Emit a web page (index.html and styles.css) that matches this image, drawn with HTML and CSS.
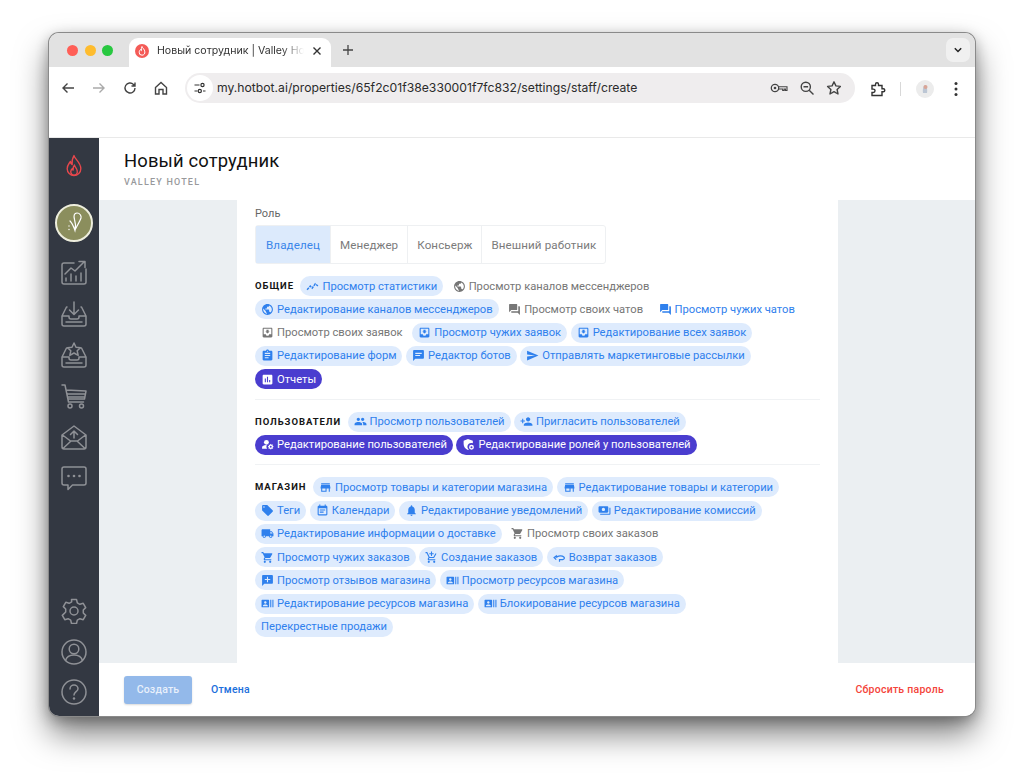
FILE: index.html
```html
<!DOCTYPE html>
<html lang="ru">
<head>
<meta charset="utf-8">
<title>Новый сотрудник | Valley Hotel</title>
<link rel="stylesheet" href="styles.css">
</head>
<body>
<svg class="defs" width="0" height="0" aria-hidden="true">
  <symbol id="i-stat" viewBox="0 0 24 24"><path d="M2 18l6-7 3.5 4L17 7l5 4" fill="none" stroke="currentColor" stroke-width="2.6" stroke-dasharray="5 1.6"/></symbol>
  <symbol id="i-public" viewBox="0 0 24 24"><path d="M12 2C6.48 2 2 6.48 2 12s4.48 10 10 10 10-4.48 10-10S17.52 2 12 2zm-1 17.93c-3.95-.49-7-3.85-7-7.93 0-.62.08-1.21.21-1.79L9 15v1c0 1.1.9 2 2 2v1.93zm6.9-2.54c-.26-.81-1-1.39-1.9-1.39h-1v-3c0-.55-.45-1-1-1H8v-2h2c.55 0 1-.45 1-1V7h2c1.1 0 2-.9 2-2v-.41c2.93 1.19 5 4.06 5 7.41 0 2.08-.8 3.97-2.1 5.39z"/></symbol>
  <symbol id="i-forum" viewBox="0 0 24 24"><path d="M21 6h-2v9H6v2c0 .55.45 1 1 1h11l4 4V7c0-.55-.45-1-1-1zm-4 6V3c0-.55-.45-1-1-1H3c-.55 0-1 .45-1 1v14l4-4h10c.55 0 1-.45 1-1z"/></symbol>
  <symbol id="i-inbox" viewBox="0 0 24 24"><path d="M19 3H5c-1.1 0-2 .9-2 2v14c0 1.1.9 2 2 2h14c1.1 0 2-.9 2-2V5c0-1.1-.9-2-2-2zm0 12h-4c0 1.66-1.35 3-3 3s-3-1.34-3-3H5V5h14v10zm-3-5h-2V7h-4v3H8l4 4 4-4z"/></symbol>
  <symbol id="i-form" viewBox="0 0 24 24"><path d="M19 3h-4.18C14.4 1.84 13.3 1 12 1c-1.3 0-2.4.84-2.82 2H5c-1.1 0-2 .9-2 2v14c0 1.1.9 2 2 2h14c1.1 0 2-.9 2-2V5c0-1.1-.9-2-2-2zm-7 0c.55 0 1 .45 1 1s-.45 1-1 1-1-.45-1-1 .45-1 1-1zm2 14H7v-2h7v2zm3-4H7v-2h10v2zm0-4H7V7h10v2z"/></symbol>
  <symbol id="i-bot" viewBox="0 0 24 24"><path d="M20 2H4c-1.1 0-2 .9-2 2v18l4-4h14c1.1 0 2-.9 2-2V4c0-1.1-.9-2-2-2zM6 7h12v2H6V7zm0 4h9v2H6v-2z" fill-rule="evenodd"/></symbol>
  <symbol id="i-send" viewBox="0 0 24 24"><path d="M2.01 21L23 12 2.01 3 2 10l15 2-15 2z"/></symbol>
  <symbol id="i-report" viewBox="0 0 24 24"><path d="M19 3H5c-1.1 0-2 .9-2 2v14c0 1.1.9 2 2 2h14c1.1 0 2-.9 2-2V5c0-1.1-.9-2-2-2zM9 17H7v-7h2v7zm4 0h-2V7h2v10zm4 0h-2v-4h2v4z"/></symbol>
  <symbol id="i-people" viewBox="0 0 24 24"><path d="M16 11c1.66 0 2.99-1.34 2.99-3S17.66 5 16 5c-1.66 0-3 1.34-3 3s1.34 3 3 3zm-8 0c1.66 0 2.99-1.34 2.99-3S9.66 5 8 5C6.34 5 5 6.34 5 8s1.34 3 3 3zm0 2c-2.33 0-7 1.17-7 3.5V19h14v-2.5c0-2.33-4.67-3.5-7-3.5zm8 0c-.29 0-.62.02-.97.05 1.16.84 1.97 1.97 1.97 3.45V19h6v-2.5c0-2.33-4.67-3.5-7-3.5z"/></symbol>
  <symbol id="i-invite" viewBox="0 0 24 24"><path d="M15 12c2.21 0 4-1.79 4-4s-1.79-4-4-4-4 1.79-4 4 1.79 4 4 4zm-9-2V7H4v3H1v2h3v3h2v-3h3v-2H6zm9 4c-2.67 0-8 1.34-8 4v2h16v-2c0-2.66-5.33-4-8-4z"/></symbol>
  <symbol id="i-manage" viewBox="0 0 24 24"><circle cx="10" cy="8" r="4.5"/><path d="M10.7 13c-.2 0-.5 0-.7 0-2.4 0-4.7.7-6.6 1.8C2.500 15.300 2 16.300 2 17.400V20h9.300c-.8-1.100-1.300-2.500-1.300-4 0-1.100.3-2.100.7-3z"/><circle cx="18" cy="16" r="3" fill="none" stroke="currentColor" stroke-width="2.400"/><path d="M18 11v2M18 19v2M13 16h2M21 16h2M14.500 12.500l1.400 1.400M20.100 18.100l1.400 1.400M14.500 19.500l1.400-1.400M20.100 13.900l1.400-1.400" stroke="currentColor" stroke-width="1.700"/></symbol>
  <symbol id="i-shield" viewBox="0 0 24 24"><path d="M11 2L3 5.200V11c0 5 3.300 9.700 8 11 .7-.2 1.300-.4 1.900-.8C11.100 20 10 18.100 10 16c0-3.900 3.100-7 7-7 1.100 0 2.100.3 3 .7V5.200L11 2z"/><circle cx="17.500" cy="17" r="3.200" fill="none" stroke="currentColor" stroke-width="2.600"/></symbol>
  <symbol id="i-store" viewBox="0 0 24 24"><path d="M20 4H4v2h16V4zm1 10v-2l-1-5H4l-1 5v2h1v6h10v-6h4v6h2v-6h1zm-9 4H6v-4h6v4z"/></symbol>
  <symbol id="i-tag" viewBox="0 0 24 24"><path d="M21.41 11.58l-9-9C12.05 2.220 11.550 2 11 2H4c-1.100 0-2 .9-2 2v7c0 .55.22 1.050.59 1.420l9 9c.36.36.86.58 1.410.58.55 0 1.050-.22 1.410-.59l7-7c.37-.36.59-.86.59-1.410 0-.55-.23-1.060-.59-1.420zM5.500 7C4.670 7 4 6.330 4 5.500S4.670 4 5.500 4 7 4.670 7 5.500 6.330 7 5.500 7z"/></symbol>
  <symbol id="i-cal" viewBox="0 0 24 24"><path d="M17 10H7v2h10v-2zm2-7h-1V1h-2v2H8V1H6v2H5c-1.110 0-1.990.9-1.990 2L3 19c0 1.100.89 2 2 2h14c1.100 0 2-.9 2-2V5c0-1.100-.9-2-2-2zm0 16H5V8h14v11zm-5-5H7v2h7v-2z"/></symbol>
  <symbol id="i-bell" viewBox="0 0 24 24"><path d="M12 22c1.100 0 2-.9 2-2h-4c0 1.100.89 2 2 2zm6-6v-5c0-3.070-1.640-5.640-4.500-6.320V4c0-.83-.67-1.500-1.500-1.500s-1.500.67-1.500 1.500v.68C7.630 5.360 6 7.920 6 11v5l-2 2v1h16v-1l-2-2z"/></symbol>
  <symbol id="i-pay" viewBox="0 0 24 24"><path d="M19 14V6c0-1.100-.9-2-2-2H3c-1.100 0-2 .9-2 2v8c0 1.100.9 2 2 2h14c1.100 0 2-.9 2-2zm-9-1c-1.660 0-3-1.340-3-3s1.340-3 3-3 3 1.340 3 3-1.340 3-3 3zm13-6v11c0 1.100-.9 2-2 2H4v-2h17V7h2z"/></symbol>
  <symbol id="i-truck" viewBox="0 0 24 24"><path d="M20 8h-3V4H3c-1.100 0-2 .9-2 2v11h2c0 1.660 1.340 3 3 3s3-1.340 3-3h6c0 1.660 1.340 3 3 3s3-1.340 3-3h2v-5l-3-4zM6 18.500c-.83 0-1.500-.67-1.500-1.500s.67-1.500 1.500-1.500 1.500.67 1.500 1.500-.67 1.500-1.500 1.500zm13.500-9l1.960 2.500H17V9.500h2.500zm-1.500 9c-.83 0-1.500-.67-1.500-1.500s.67-1.500 1.500-1.500 1.500.67 1.500 1.500-.67 1.500-1.500 1.500z"/></symbol>
  <symbol id="i-cart" viewBox="0 0 24 24"><path d="M7 18c-1.100 0-1.990.9-1.990 2S5.900 22 7 22s2-.9 2-2-.9-2-2-2zM1 2v2h2l3.600 7.590-1.350 2.450c-.16.28-.25.61-.25.96 0 1.100.9 2 2 2h12v-2H7.420c-.14 0-.25-.11-.25-.25l.03-.12.9-1.630h7.450c.75 0 1.410-.41 1.750-1.030l3.580-6.490c.08-.14.12-.31.12-.48 0-.55-.45-1-1-1H5.210l-.94-2H1zm16 16c-1.100 0-1.990.9-1.990 2s.89 2 1.990 2 2-.9 2-2-.9-2-2-2z"/></symbol>
  <symbol id="i-addcart" viewBox="0 0 24 24"><path d="M11 9h2V6h3V4h-3V1h-2v3H8v2h3v3zm-4 9c-1.100 0-1.990.9-1.990 2S5.900 22 7 22s2-.9 2-2-.9-2-2-2zm10 0c-1.100 0-1.990.9-1.990 2s.89 2 1.990 2 2-.9 2-2-.9-2-2-2zm-9.830-3.250l.03-.12.9-1.630h7.450c.75 0 1.410-.41 1.750-1.030l3.860-7.010L19.420 4h-.01l-1.100 2-2.760 5H8.530l-.13-.27L6.160 6l-.95-2-.94-2H1v2h2l3.600 7.590-1.350 2.450c-.16.28-.25.61-.25.96 0 1.100.9 2 2 2h12v-2H7.420c-.13 0-.25-.11-.25-.25z"/></symbol>
  <symbol id="i-return" viewBox="0 0 24 24"><path d="M6 16l-4-4 4-3v2.500h2M6 12c3-4 11-4 14-1 2 2 1 4-2 5h-6v4" fill="none" stroke="currentColor" stroke-width="2.200"/></symbol>
  <symbol id="i-review" viewBox="0 0 24 24"><path d="M20 2H4c-1.100 0-2 .9-2 2v18l4-4h14c1.100 0 2-.9 2-2V4c0-1.100-.9-2-2-2zm-3 9h-4v4h-2v-4H7V9h4V5h2v4h4v2z"/></symbol>
  <symbol id="i-res" viewBox="0 0 24 24"><path d="M21 5v14h2V5h-2zm-4 14h2V5h-2v14zM14 5H2c-.55 0-1 .45-1 1v12c0 .55.45 1 1 1h12c.55 0 1-.45 1-1V6c0-.55-.45-1-1-1zM8 7.750c1.240 0 2.250 1.010 2.250 2.250S9.240 12.250 8 12.250 5.750 11.240 5.750 10 6.760 7.750 8 7.750zM12.500 17h-9v-.75c0-1.500 3-2.250 4.500-2.250s4.500.75 4.500 2.250V17z"/></symbol>
</svg>

<div class="window">
  <div class="tabbar">
    <div class="lights"><i class="light red"></i><i class="light yellow"></i><i class="light green"></i></div>
    <div class="tab">
      <svg class="favicon" viewBox="0 0 14 14"><circle cx="7" cy="7" r="7" fill="#f45b57"/><path d="M7 2.500c.3 1.500 2.800 2.800 2.800 5.300A2.800 2.800 0 0 1 7 11.200a2.800 2.800 0 0 1-2.800-3C4.200 6.800 5 6.200 5.500 5.500c.2.700.5 1 .9 1.200C6.300 5.200 6.400 3.600 7 2.500z" fill="none" stroke="#fff" stroke-width="1"/></svg>
      <span class="tab-title">Новый сотрудник | Valley Hotel</span>
      <svg class="tab-x" viewBox="0 0 10 10"><path d="M1.500 1.500l7 7M8.500 1.500l-7 7" stroke="#333" stroke-width="1.400"/></svg>
    </div>
    <svg class="newtab" viewBox="0 0 12 12"><path d="M6 1v10M1 6h10" stroke="#444" stroke-width="1.300"/></svg>
    <div class="tab-menu"><svg viewBox="0 0 10 10"><path d="M1.800 3.300L5 6.500l3.200-3.200" fill="none" stroke="#222" stroke-width="1.500"/></svg></div>
  </div>

  <div class="toolbar">
    <div class="nav">
      <svg class="tb-ic" viewBox="0 0 16 16"><path d="M14 8H3M7.500 3.500L3 8l4.500 4.500" fill="none" stroke="#444" stroke-width="1.400"/></svg>
      <svg class="tb-ic" viewBox="0 0 16 16"><path d="M2 8h11M8.500 3.500L13 8l-4.500 4.500" fill="none" stroke="#aaa" stroke-width="1.400"/></svg>
      <svg class="tb-ic" viewBox="0 0 16 16"><path d="M13 8a5 5 0 1 1-1.500-3.600L13 6M13 2.500V6H9.500" fill="none" stroke="#444" stroke-width="1.400"/></svg>
      <svg class="tb-ic" viewBox="0 0 16 16"><path d="M2.500 7.500L8 2.500l5.500 5V14H10V9.500H6V14H2.500z" fill="none" stroke="#444" stroke-width="1.400"/></svg>
    </div>
    <div class="omnibox">
      <span class="site-btn"><svg viewBox="0 0 14 14"><path d="M1.500 4h5M1.500 10h3M10 10h2.500" stroke="#333" stroke-width="1.200" fill="none"/><circle cx="9.500" cy="4" r="1.600" fill="none" stroke="#333" stroke-width="1.200"/><circle cx="6.800" cy="10" r="1.600" fill="none" stroke="#333" stroke-width="1.200"/></svg></span>
      <span class="url">my.hotbot.ai/properties/65f2c01f38e330001f7fc832/settings/staff/create</span>
      <span class="omni-icons">
        <svg class="omni-key" viewBox="0 0 18 12"><circle cx="5" cy="6" r="3.700" fill="none" stroke="#444" stroke-width="1.300"/><circle cx="5" cy="6" r="1.300" fill="#444"/><path d="M9 4.800h8v3.700h-1.500V7h-1.300v1.500H12.700V7H9" fill="none" stroke="#444" stroke-width="1.100"/></svg>
        <svg class="tb-ic" viewBox="0 0 16 16"><circle cx="6.800" cy="6.800" r="4.600" fill="none" stroke="#444" stroke-width="1.400"/><path d="M10.200 10.200L14.500 14.500M4.500 6.800h4.600" stroke="#444" stroke-width="1.400"/></svg>
        <svg class="tb-ic" viewBox="0 0 16 16"><path d="M8 1.800l1.900 4.100 4.500.5-3.300 3.100.9 4.500-4-2.300-4 2.300.9-4.500-3.300-3.100 4.500-.5z" fill="none" stroke="#444" stroke-width="1.400" stroke-linejoin="round"/></svg>
      </span>
    </div>
    <div class="tb-right">
      <svg class="ext" viewBox="0 0 16 16"><path d="M2 4.500h3.500V3.200a1.500 1.500 0 0 1 3 0v1.300H12v3.200h1.300a1.500 1.500 0 0 1 0 3H12v3.800H2v-3h1.300a1.700 1.700 0 0 0 0-3.400H2z" fill="none" stroke="#333" stroke-width="1.400"/></svg>
      <i class="tb-sep"></i>
      <span class="profile"><svg viewBox="0 0 18 18"><circle cx="9" cy="9" r="9" fill="#ececec"/><path d="M7 13c-.5-3 0-7 2-8 2 .5 2.500 5 2 8z" fill="#bcc6d4"/><circle cx="9.500" cy="7" r="2" fill="#d9a596"/></svg></span>
      <svg class="dots" viewBox="0 0 4 16"><circle cx="2" cy="2.500" r="1.500" fill="#333"/><circle cx="2" cy="8" r="1.500" fill="#333"/><circle cx="2" cy="13.500" r="1.500" fill="#333"/></svg>
    </div>
  </div>

  <div class="app">
    <aside class="sidebar">
      <svg class="logo" viewBox="0 0 22 26"><g fill="none" stroke="#e8474c" stroke-width="1.500" stroke-linejoin="round"><path d="M11 1.500c.5 3.500 7.500 7.500 7.500 14.500a7.500 7.500 0 0 1-15 0c0-4 2-5.500 3.500-8 .3 2 .8 3 2 3.500C8.500 8 9.500 4 11 1.500z"/><path d="M11.500 12c.3 2 3 3.500 3 6.500A3.500 3.500 0 0 1 11 23a3.500 3.500 0 0 1-3.500-4c0-1.500 1-2.500 1.500-3 .2.800.5 1.200 1 1.500 0-2 0-4 1.500-5.500z"/></g></svg>
      <div class="hotel-avatar"><svg viewBox="0 0 34 34"><path d="M20 7c-3 0-3.500 3-2.500 6.500 1.500 4.500 1 9 .5 11-1-3-3-7.500-5-9.500M18 24c2-4 5-9 6-12 .5-2-1-5-4-5" fill="none" stroke="#fff" stroke-width="1.200" stroke-linecap="round"/><circle cx="12" cy="20" r=".7" fill="#fff"/><circle cx="12" cy="23.500" r=".7" fill="#fff"/></svg></div>
      <nav class="side-nav">
        <svg class="side-ic" viewBox="0 0 26 26"><path d="M13 3H3a2 2 0 0 0-2 2v17a2 2 0 0 0 2 2h20a2 2 0 0 0 2-2V9M4 14l6-6 4 3 9-9M18 1.500h6v6M5 21v-3M10 21v-7M15 21v-5M20 21v-8"/></svg>
        <svg class="side-ic" viewBox="0 0 26 26"><path d="M6 6h-.5L1 15v8a2 2 0 0 0 2 2h20a2 2 0 0 0 2-2v-8l-4.500-9H20M1 15h7v1a2 2 0 0 0 2 2h6a2 2 0 0 0 2-2v-1h7M13 1v12M8.500 9l4.500 4.500L17.500 9M5 21h16"/></svg>
        <svg class="side-ic" viewBox="0 0 26 26"><path d="M6 6h-.5L1 15v8a2 2 0 0 0 2 2h20a2 2 0 0 0 2-2v-8l-4.500-9H20M1 15h7v1a2 2 0 0 0 2 2h6a2 2 0 0 0 2-2v-1h7M13 1l2 4.200 4.500.5-3.300 3.100 1 4.600-4.200-2.400-4.200 2.400 1-4.600-3.300-3.100 4.500-.5zM5 21h16"/></svg>
        <svg class="side-ic" viewBox="0 0 26 26"><path d="M1 2h3l3.500 17h15M5 7l20 1-1.500 8H7M6.500 11h17.500M7 14h16.500"/><circle cx="9" cy="23" r="2"/><circle cx="20.500" cy="23" r="2"/></svg>
        <svg class="side-ic" viewBox="0 0 26 26"><path d="M1 11L13 2l12 9v12a2 2 0 0 1-2 2H3a2 2 0 0 1-2-2zM1.500 11l8 6M24.500 11l-8 6M2 24.500l8-7.500h6l8 7.500M13 14V7M9.500 10.500L13 7l3.500 3.500"/></svg>
        <svg class="side-ic" viewBox="0 0 26 26"><path d="M3 2h20a2 2 0 0 1 2 2v14a2 2 0 0 1-2 2H11.500L7 24.500V20H3a2 2 0 0 1-2-2V4a2 2 0 0 1 2-2z"/><g class="dots-fill"><circle cx="7.500" cy="11" r="1.300"/><circle cx="13" cy="11" r="1.300"/><circle cx="18.500" cy="11" r="1.300"/></g></svg>
      </nav>
      <nav class="side-bottom">
        <svg class="side-ic" viewBox="0 0 26 26"><path d="M10.500 1.500h5l.8 3.300 2.600 1.500 3.300-1 2.500 4.300-2.400 2.400v3l2.400 2.400-2.500 4.300-3.300-1-2.600 1.500-.8 3.300h-5l-.8-3.300-2.600-1.500-3.300 1-2.500-4.300L4.700 14v-3L2.300 8.600l2.500-4.300 3.300 1 2.600-1.500z" stroke-linejoin="round"/><circle cx="13" cy="13" r="4"/></svg>
        <svg class="side-ic" viewBox="0 0 26 26"><circle cx="13" cy="13" r="12"/><circle cx="13" cy="10" r="4.800"/><path d="M4.500 21.500c1-3.500 4-5.500 8.500-5.500s7.500 2 8.500 5.500"/></svg>
        <svg class="side-ic" viewBox="0 0 26 26"><circle cx="13" cy="13" r="12"/><path d="M9 10c0-2.500 2-4 4-4s4 1.500 4 3.700c0 3-4 3-4 6.300"/><circle class="dot-solid" cx="13" cy="19.500" r="1.200"/></svg>
      </nav>
    </aside>

    <div class="page">
      <header class="page-head">
        <h1 class="page-title">Новый сотрудник</h1>
        <div class="page-sub">VALLEY HOTEL</div>
      </header>

      <main class="canvas">
        <section class="card">
          <div class="field-label">Роль</div>
          <div class="segments">
            <span class="seg active">Владелец</span>
            <span class="seg">Менеджер</span>
            <span class="seg">Консьерж</span>
            <span class="seg">Внешний работник</span>
          </div>

          <div class="group">
            <span class="group-name">ОБЩИЕ</span>
            <span class="chip on"><svg class="ci"><use href="#i-stat"/></svg>Просмотр статистики</span>
            <span class="chip off"><svg class="ci"><use href="#i-public"/></svg>Просмотр каналов мессенджеров</span>
            <span class="chip on"><svg class="ci"><use href="#i-public"/></svg>Редактирование каналов мессенджеров</span>
            <span class="chip off"><svg class="ci"><use href="#i-forum"/></svg>Просмотр своих чатов</span>
            <span class="chip text"><svg class="ci"><use href="#i-forum"/></svg>Просмотр чужих чатов</span>
            <span class="chip off"><svg class="ci"><use href="#i-inbox"/></svg>Просмотр своих заявок</span>
            <span class="chip on"><svg class="ci"><use href="#i-inbox"/></svg>Просмотр чужих заявок</span>
            <span class="chip on"><svg class="ci"><use href="#i-inbox"/></svg>Редактирование всех заявок</span>
            <span class="chip on"><svg class="ci"><use href="#i-form"/></svg>Редактирование форм</span>
            <span class="chip on"><svg class="ci"><use href="#i-bot"/></svg>Редактор ботов</span>
            <span class="chip on"><svg class="ci"><use href="#i-send"/></svg>Отправлять маркетинговые рассылки</span>
            <span class="chip dark"><svg class="ci"><use href="#i-report"/></svg>Отчеты</span>
          </div>

          <div class="group">
            <span class="group-name">ПОЛЬЗОВАТЕЛИ</span>
            <span class="chip on"><svg class="ci"><use href="#i-people"/></svg>Просмотр пользователей</span>
            <span class="chip on"><svg class="ci"><use href="#i-invite"/></svg>Пригласить пользователей</span>
            <span class="chip dark"><svg class="ci"><use href="#i-manage"/></svg>Редактирование пользователей</span>
            <span class="chip dark"><svg class="ci"><use href="#i-shield"/></svg>Редактирование ролей у пользователей</span>
          </div>

          <div class="group last">
            <span class="group-name">МАГАЗИН</span>
            <span class="chip on"><svg class="ci"><use href="#i-store"/></svg>Просмотр товары и категории магазина</span>
            <span class="chip on"><svg class="ci"><use href="#i-store"/></svg>Редактирование товары и категории</span>
            <span class="chip on"><svg class="ci"><use href="#i-tag"/></svg>Теги</span>
            <span class="chip on"><svg class="ci"><use href="#i-cal"/></svg>Календари</span>
            <span class="chip on"><svg class="ci"><use href="#i-bell"/></svg>Редактирование уведомлений</span>
            <span class="chip on"><svg class="ci"><use href="#i-pay"/></svg>Редактирование комиссий</span>
            <span class="chip on"><svg class="ci"><use href="#i-truck"/></svg>Редактирование информации о доставке</span>
            <span class="chip off"><svg class="ci"><use href="#i-cart"/></svg>Просмотр своих заказов</span>
            <span class="chip on"><svg class="ci"><use href="#i-cart"/></svg>Просмотр чужих заказов</span>
            <span class="chip on"><svg class="ci"><use href="#i-addcart"/></svg>Создание заказов</span>
            <span class="chip on"><svg class="ci"><use href="#i-return"/></svg>Возврат заказов</span>
            <span class="chip on"><svg class="ci"><use href="#i-review"/></svg>Просмотр отзывов магазина</span>
            <span class="chip on"><svg class="ci"><use href="#i-res"/></svg>Просмотр ресурсов магазина</span>
            <span class="chip on"><svg class="ci"><use href="#i-res"/></svg>Редактирование ресурсов магазина</span>
            <span class="chip on"><svg class="ci"><use href="#i-res"/></svg>Блокирование ресурсов магазина</span>
            <span class="chip on">Перекрестные продажи</span>
          </div>
        </section>
      </main>

      <footer class="page-foot">
        <button class="btn-create" type="button">Создать</button>
        <a class="btn-cancel">Отмена</a>
        <a class="btn-reset">Сбросить пароль</a>
      </footer>
    </div>
  </div>
</div>
</body>
</html>
```

FILE: styles.css
```css
* { box-sizing: border-box; }
html, body { margin: 0; height: 100%; }
body {
  background: #fff;
  padding: 33px 0 0 49px;
  font-family: Roboto, "Noto Sans", sans-serif;
  overflow: hidden;
}
.defs { position: absolute; }
svg { display: block; flex: none; }

.window {
  width: 926px;
  height: 683px;
  display: flex;
  flex-direction: column;
  border-radius: 10px;
  overflow: hidden;
  background: #fff;
  box-shadow: 0 0 0 1px #8a8a8a, 0 18px 32px rgba(0,0,0,.5), 0 4px 14px rgba(0,0,0,.3);
}

/* tab strip */
.tabbar {
  height: 34px;
  flex: none;
  display: flex;
  align-items: flex-start;
  background: #e2e2e2;
  padding-top: 5px;
}
.lights { display: flex; gap: 6.5px; margin: 6.500px 0 0 18px; width: 62px; }
.light { width: 11px; height: 11px; border-radius: 50%; }
.red { background: #ff5f57; }
.yellow { background: #febc2e; }
.green { background: #28c840; }
.tab {
  width: 202px;
  height: 29px;
  background: #fff;
  border-radius: 9px 9px 0 0;
  display: flex;
  align-items: center;
  padding: 0 9px 4px 6px;
  gap: 8px;
}
.favicon { width: 14px; height: 14px; }
.tab-title {
  flex: 1;
  min-width: 0;
  white-space: nowrap;
  overflow: hidden;
  font: 400 10.600px/14px Inter, sans-serif;
  color: #333;
  -webkit-mask-image: linear-gradient(90deg, #000 85%, transparent 100%);
  mask-image: linear-gradient(90deg, #000 85%, transparent 100%);
}
.tab-x { width: 10px; height: 10px; }
.newtab { width: 12px; height: 12px; margin: 6px 0 0 11px; }
.tab-menu {
  width: 24px;
  height: 24px;
  margin: 0 5px 0 auto;
  border-radius: 7px;
  background: #f0f0f0;
  display: flex;
  align-items: center;
  justify-content: center;
}
.tab-menu svg { width: 10px; height: 10px; }

/* toolbar */
.toolbar {
  height: 71px;
  flex: none;
  display: flex;
  align-items: flex-start;
  padding-top: 6px;
  border-bottom: 1px solid #e9e9e9;
  background: #fff;
}
.nav { display: flex; gap: 15px; padding: 7px 0 0 11px; width: 136px; }
.tb-ic { width: 16px; height: 16px; }
.omnibox {
  width: 670px;
  height: 30px;
  background: #efedee;
  border-radius: 15px;
  display: flex;
  align-items: center;
  padding: 0 13px 0 2px;
}
.site-btn {
  width: 26px;
  height: 26px;
  border-radius: 50%;
  background: #fff;
  display: flex;
  align-items: center;
  justify-content: center;
  margin-right: 4px;
}
.site-btn svg { width: 14px; height: 14px; }
.url { font: 400 12.200px/16px Inter, sans-serif; color: #2b2b2b; white-space: nowrap; }
.omni-icons { margin-left: auto; display: flex; align-items: center; gap: 11px; }
.omni-key { width: 18px; height: 12px; }
.tb-right { display: flex; align-items: center; margin: 7px 0 0 15px; }
.ext { width: 16px; height: 16px; }
.tb-sep { width: 1px; height: 14px; background: #d8d8d8; margin: 0 14px; }
.profile { width: 18px; height: 18px; margin-left: 1px; }
.dots { width: 4px; height: 16px; margin-left: 20px; }

/* app */
.app { flex: 1; min-height: 0; display: flex; }
.sidebar {
  width: 50px;
  flex: none;
  background: #333842;
  display: flex;
  flex-direction: column;
  align-items: center;
  padding: 16px 0 11px;
}
.logo { width: 20px; height: 24px; margin-bottom: 26px; }
.hotel-avatar {
  width: 38px;
  height: 38px;
  border-radius: 50%;
  background: #8b8e5d;
  border: 2px solid #eeeedd;
  margin-bottom: 18px;
}
.hotel-avatar svg { width: 34px; height: 34px; }
.side-nav { display: flex; flex-direction: column; gap: 15px; }
.side-bottom { display: flex; flex-direction: column; gap: 14.500px; margin-top: auto; }
.side-ic { width: 26px; height: 26px; fill: none; stroke: #8f9196; stroke-width: 1.500; stroke-linecap: round; stroke-linejoin: round; }
.dots-fill, .dot-solid { fill: #8f9196; stroke: none; }

.page { flex: 1; min-width: 0; display: flex; flex-direction: column; }
.page-head { height: 62px; flex: none; padding: 12px 25px 0; background: #fff; }
.page-title { margin: 0; font: 400 18.400px/22px Roboto, sans-serif; color: #111; letter-spacing: .15px; }
.page-sub { margin-top: 4px; font: 500 9px/12px Roboto, sans-serif; letter-spacing: 1.200px; color: #98999b; }

.canvas { flex: 1; min-height: 0; background: #ebeff2; padding-left: 138px; overflow: hidden; }
.card { width: 601px; height: 100%; background: #fff; padding: 7px 18px 0; }
.field-label { font: 400 11px/14px Roboto, sans-serif; color: #666; margin-bottom: 4px; }
.segments {
  display: inline-flex;
  height: 39px;
  border: 1px solid #eef0f2;
  border-radius: 3px;
  margin-bottom: 12px;
  vertical-align: top;
}
.seg {
  display: flex;
  align-items: center;
  padding: 0 9px;
  font-size: 11.600px;
  letter-spacing: .1px;
  color: #7b7b7b;
  border-left: 1px solid #eef0f2;
}
.seg:first-child { border-left: 0; }
.seg.active { background: #dceafc; color: #3a86ea; padding: 0 10px; }

.group {
  display: flex;
  flex-wrap: wrap;
  align-items: center;
  gap: 3.250px 3.500px;
  padding-bottom: 9.500px;
  border-bottom: 1px solid #f0f2f4;
  margin-bottom: 12px;
}
.group.last { border-bottom: 0; margin-bottom: 0; }
.group-name {
  font: 700 9.500px/20px Roboto, sans-serif;
  letter-spacing: .95px;
  color: #151515;
  margin-right: 3px;
}
.chip {
  height: 20px;
  display: inline-flex;
  align-items: center;
  gap: 3px;
  padding: 0 6px;
  border-radius: 10px;
  font-size: 11.200px;
  white-space: nowrap;
}
.ci { width: 13px; height: 13px; fill: currentColor; }
.on { background: #deebfd; color: #2f80ed; }
.off { color: #767676; }
.text { color: #2f80ed; }
.dark { background: #4a3dcf; color: #fff; }

.page-foot {
  height: 53px;
  flex: none;
  background: #fff;
  display: flex;
  align-items: center;
  padding: 0 31px 0 25px;
}
.btn-create {
  width: 68px;
  height: 28px;
  border: 0;
  border-radius: 3px;
  background: #93b9ea;
  box-shadow: 0 1px 2px rgba(0,0,0,.15);
  color: #e8f0fb;
  font: 500 10.500px/14px Roboto, sans-serif;
  letter-spacing: .2px;
}
.btn-cancel { margin-left: 19px; font: 500 10.500px/14px Roboto, sans-serif; letter-spacing: .2px; color: #1c6fdc; }
.btn-reset { margin-left: auto; font: 500 10.500px/14px Roboto, sans-serif; letter-spacing: .25px; color: #f4433a; }
```
